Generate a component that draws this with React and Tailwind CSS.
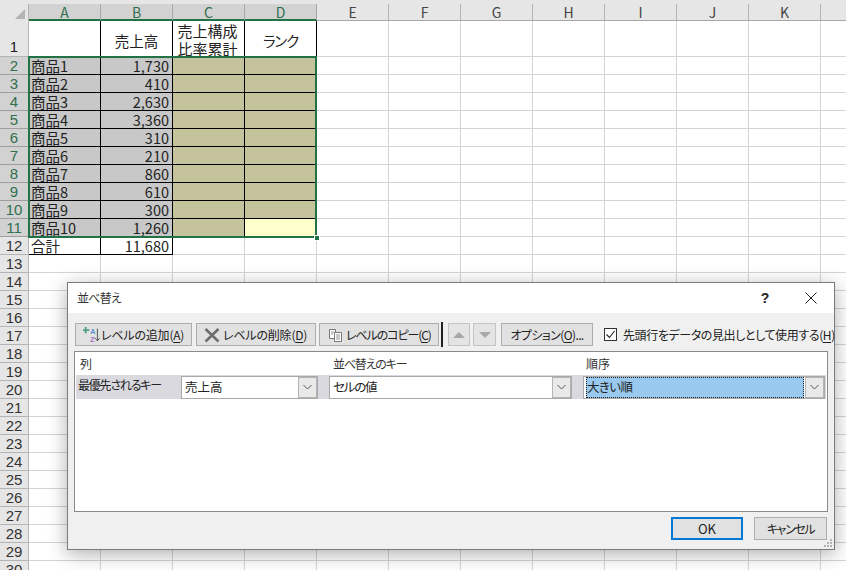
const jp = { fontFamily: '"Noto Sans CJK JP", "Noto Sans", sans-serif' };

const columns = ["A", "B", "C", "D", "E", "F", "G", "H", "I", "J", "K", ""];
const rows = [
  ["商品1", "1,730"],
  ["商品2", "410"],
  ["商品3", "2,630"],
  ["商品4", "3,360"],
  ["商品5", "310"],
  ["商品6", "210"],
  ["商品7", "860"],
  ["商品8", "610"],
  ["商品9", "300"],
  ["商品10", "1,260"],
  ["合計", "11,680"],
];
const emptyRows = Array.from({ length: 18 }, (_, i) => i + 13);
const plainCols = ["E", "F", "G", "H", "I", "J", "K", "L"];

function Plain() {
  return <div className="w-[72px] shrink-0 h-full border-r border-b border-[#d4d4d4]" />;
}

function RowHead({ n, selected }) {
  return (
    <div
      className={`w-[29px] shrink-0 h-full border-r border-b flex items-center justify-center font-['Liberation_Sans'] text-[15px] leading-none ${
        selected ? "bg-[#d2d2d2] text-[#2f6f4e] border-[#9f9f9f]" : "bg-[#e6e6e6] text-[#333] border-[#b4b4b4]"
      }`}
    >
      {n}
    </div>
  );
}

function Sheet() {
  return (
    <div className="w-[846px] h-[570px] bg-white overflow-hidden text-black" style={jp}>
      <div className="h-1 bg-[#e6e6e6]" />
      {/* column headers */}
      <div className="flex h-[17px]">
        <div className="w-[29px] shrink-0 bg-[#e6e6e6] border-r border-[#b4b4b4] flex items-end justify-end pr-[3px] pb-[2px]">
          <div className="w-0 h-0 border-l-[10px] border-l-transparent border-b-[10px] border-b-[#b4b4b4]" />
        </div>
        {columns.map((c, i) => (
          <div
            key={i}
            className={`w-[72px] shrink-0 border-r flex items-center justify-center text-[14px] leading-none ${
              i < 4
                ? "bg-[#d2d2d2] text-[#2f6f4e] border-[#a8a8a8] border-b-2 border-b-[#217346]"
                : "bg-[#e6e6e6] text-[#444] border-[#b4b4b4] border-b border-b-[#a8a8a8]"
            }`}
          >
            {c}
          </div>
        ))}
      </div>
      {/* row 1 */}
      <div className="flex h-9">
        <div className="w-[29px] shrink-0 h-full bg-[#e6e6e6] border-r border-b border-[#b4b4b4] flex items-end justify-center font-['Liberation_Sans'] text-[15px] leading-none pb-[2px] text-[#222]">
          1
        </div>
        <div className="w-[72px] shrink-0 h-full border-r border-b border-black" />
        <div className="w-[72px] shrink-0 h-full border-r border-b border-black flex items-center justify-center text-[14.5px] text-[#222] pt-[4px]">
          売上高
        </div>
        <div className="w-[72px] shrink-0 h-full border-r border-b border-black overflow-hidden text-center text-[15px] leading-[18px] pt-[1px] pr-[2px] text-[#222] whitespace-nowrap">
          売上構成
          <br />
          比率累計
        </div>
        <div className="w-[72px] shrink-0 h-full border-r border-b border-black flex items-center justify-center text-[14.5px] tracking-[-1.2px] text-[#222] pt-[5px]">
          ランク
        </div>
        {plainCols.map((c) => (
          <Plain key={c} />
        ))}
      </div>
      {/* rows 2 - 12 */}
      {rows.map(([name, val], i) => {
        const isTotal = i === 10;
        const bg = isTotal ? "bg-white" : "bg-[#c8c8c8]";
        return (
          <div key={name} className="flex h-[18px]">
            <RowHead n={i + 2} selected={!isTotal} />
            <div className={`w-[72px] shrink-0 h-full border-r border-b border-black pl-[2px] text-[14.5px] leading-[17px] text-[#222] ${bg}`}>
              {name}
            </div>
            <div className={`w-[72px] shrink-0 h-full border-r border-b border-black pr-[3px] text-right text-[14.5px] leading-[17px] text-[#222] ${bg}`}>
              {val}
            </div>
            {isTotal ? (
              <>
                <Plain />
                <Plain />
              </>
            ) : (
              <>
                <div className="w-[72px] shrink-0 h-full border-r border-b border-black bg-[#c4c39b]" />
                <div className={`w-[72px] shrink-0 h-full border-r border-b border-black ${i === 9 ? "bg-[#ffffcc]" : "bg-[#c4c39b]"}`} />
              </>
            )}
            {plainCols.map((c) => (
              <Plain key={c} />
            ))}
          </div>
        );
      })}
      {emptyRows.map((n) => (
        <div key={n} className="flex h-[18px]">
          <RowHead n={n} />
          {plainCols.concat(["M", "N", "O", "P"]).map((c) => (
            <Plain key={c} />
          ))}
        </div>
      ))}
    </div>
  );
}

function Mn({ children }) {
  return <span className="underline underline-offset-2">{children}</span>;
}

function ToolButton({ className = "", children }) {
  return (
    <div className={`h-[23px] shrink-0 bg-[#e1e1e1] border border-[#adadad] flex items-center text-[12px] leading-none text-[#222] whitespace-nowrap ${className}`}>
      {children}
    </div>
  );
}

function Chevron() {
  return (
    <svg width="9" height="6" viewBox="0 0 9 6" fill="none" stroke="#555" strokeWidth="1">
      <path d="M0.5 1 L4.5 5 L8.5 1" />
    </svg>
  );
}

function Combo({ className = "", children }) {
  return (
    <div className={`h-[23px] shrink-0 bg-white border border-[#a9a9a9] flex items-stretch text-[12.5px] text-[#222] ${className}`}>
      <div className="flex-1 min-w-0 flex items-center">{children}</div>
      <div className="w-[19px] shrink-0 bg-[#e9e9e9] border border-[#b4b4b4] flex items-center justify-center">
        <Chevron />
      </div>
    </div>
  );
}

function Dialog() {
  return (
    <div
      className="absolute left-[67px] top-[282px] w-[768px] h-[268px] bg-[#f0f0f0] border border-[#7a7a7a] shadow-[0_4px_18px_rgba(0,0,0,0.32)] flex flex-col text-[#222]"
      style={jp}
    >
      {/* title bar */}
      <div className="h-[30px] shrink-0 bg-white flex items-center pl-[9px] text-[12px]">
        <span className="flex-1 text-[#333] tracking-[-0.8px]">並べ替え</span>
        <span className="w-[16px] text-center font-bold text-[14px] mr-[32px]" style={{ fontFamily: '"Liberation Sans", sans-serif' }}>
          ?
        </span>
        <svg width="12" height="12" viewBox="0 0 12 12" className="mr-[17px]" stroke="#222" strokeWidth="1" fill="none">
          <path d="M0.5 0.5 L11.5 11.5 M11.5 0.5 L0.5 11.5" />
        </svg>
      </div>

      {/* toolbar */}
      <div className="flex items-center h-[23px] mt-[10px] pl-[7px]">
        <ToolButton className="w-[117px] pl-[7px]">
          <svg width="18" height="18" viewBox="0 0 20 20" className="shrink-0">
            <path d="M3 1v7M0 4.500h7" stroke="#4f9d86" strokeWidth="2" />
            <text x="8" y="9" fontSize="8" fontWeight="700" fill="#5a8ec9" fontFamily="Liberation Sans">A</text>
            <text x="8" y="18" fontSize="8" fontWeight="700" fill="#a56fc4" fontFamily="Liberation Sans">Z</text>
            <path d="M16 3v13M13.500 13.500 16 16.500l2.500-3" stroke="#444" strokeWidth="1" fill="none" />
          </svg>
          <span className="tracking-[-0.2px]">
            レベルの追加(<Mn>A</Mn>)
          </span>
        </ToolButton>
        <ToolButton className="w-[120px] ml-[4px] pl-[7px] gap-[3px]">
          <svg width="16" height="16" viewBox="0 0 16 16" className="shrink-0">
            <path d="M1.500 2 L14.500 14.500 M14.500 2 L1.500 14.500" stroke="#6e6e6e" strokeWidth="2.600" />
          </svg>
          <span className="tracking-[-0.2px]">
            レベルの削除(<Mn>D</Mn>)
          </span>
        </ToolButton>
        <ToolButton className="w-[120px] ml-[3px] pl-[8px] gap-[3px]">
          <svg width="15" height="14" viewBox="0 0 15 14" className="shrink-0" fill="#fff" stroke="#777" strokeWidth="1">
            <path d="M1.500 1.500h6v9h-6z" />
            <path d="M6.500 4.500h7v9h-7z" />
            <path d="M8 7h4M8 9h4M8 11h4M3 4h3M3 6h2" fill="none" strokeWidth="0.800" />
          </svg>
          <span className="tracking-[-1.1px]">
            レベルのコピー(<Mn>C</Mn>)
          </span>
        </ToolButton>
        <div className="w-[2px] h-[25px] ml-[2px] bg-[#222] shrink-0" />
        <ToolButton className="w-[22px] ml-[5px] justify-center bg-[#e4e4e4] border-[#c4c4c4]">
          <div className="w-0 h-0 border-x-[6px] border-x-transparent border-b-[6px] border-b-[#a8a8a8]" />
        </ToolButton>
        <ToolButton className="w-[23px] ml-[3px] justify-center bg-[#e4e4e4] border-[#c4c4c4]">
          <div className="w-0 h-0 border-x-[6px] border-x-transparent border-t-[6px] border-t-[#a8a8a8]" />
        </ToolButton>
        <ToolButton className="w-[92px] ml-[5px] justify-center">
          <span className="tracking-[-0.6px]">
            オプション(<Mn>O</Mn>)...
          </span>
        </ToolButton>
        <div className="w-[13px] h-[13px] ml-[11px] shrink-0 bg-white border border-[#333] flex items-center justify-center">
          <svg width="11" height="11" viewBox="0 0 11 11" fill="none" stroke="#222" strokeWidth="1.100">
            <path d="M1.500 5.500 L4.500 8.500 L9.500 2" />
          </svg>
        </div>
        <span className="ml-[6px] text-[12px] tracking-[-0.4px] whitespace-nowrap">
          先頭行をデータの見出しとして使用する(<Mn>H</Mn>)
        </span>
      </div>

      {/* levels list */}
      <div className="mt-[5px] mx-[6px] h-[161px] bg-white border border-[#8a8a8a] flex flex-col">
        <div className="flex h-[23px] shrink-0 items-center text-[12px] text-[#333]">
          <span className="w-[254px] pl-[5px] shrink-0">列</span>
          <span className="w-[253px] pl-[4px] shrink-0 tracking-[-1.2px]">並べ替えのキー</span>
          <span className="pl-[4px]">順序</span>
        </div>
        <div className="flex items-center h-[24px] mx-[1px] bg-[#d9d9df] shrink-0">
          <span className="w-[105px] pl-[2px] shrink-0 text-[12px] tracking-[-1.2px] -mt-[4px] whitespace-nowrap">最優先されるキー</span>
          <Combo className="w-[137px]">
            <span className="pl-[3px]">売上高</span>
          </Combo>
          <Combo className="w-[243px] ml-[11px]">
            <span className="pl-[3px] tracking-[-1.2px]">セルの値</span>
          </Combo>
          <Combo className="w-[242px] ml-[11px]">
            <span className="w-full h-full m-[2px] mr-[1px] bg-[#99c9ef] border border-dotted border-[#222] flex items-center tracking-[-0.6px]">
              大きい順
            </span>
          </Combo>
        </div>
      </div>

      {/* footer */}
      <div className="flex-1 flex items-start justify-end pt-[5px] pr-[7px] relative">
        <div className="w-[72px] h-[23px] bg-[#e1e1e1] border-2 border-[#0078d7] flex items-center justify-center text-[13px]">OK</div>
        <div className="w-[73px] h-[23px] ml-[11px] bg-[#e1e1e1] border border-[#adadad] flex items-center justify-center text-[12px] tracking-[-1.4px]">キャンセル</div>
        <svg width="10" height="10" viewBox="0 0 10 10" className="absolute right-[1px] bottom-[1px]" fill="#b5b5b5">
          <rect x="7" y="1" width="2" height="2" />
          <rect x="4" y="4" width="2" height="2" />
          <rect x="7" y="4" width="2" height="2" />
          <rect x="1" y="7" width="2" height="2" />
          <rect x="4" y="7" width="2" height="2" />
          <rect x="7" y="7" width="2" height="2" />
        </svg>
      </div>
    </div>
  );
}

export default function App() {
  return (
    <div className="relative w-[846px] h-[570px] overflow-hidden [font-feature-settings:'palt']">
      <Sheet />
      {/* selection range A2:D11 */}
      <div className="absolute left-[28px] top-[56px] w-[289px] h-[182px] border-2 border-[#217346]" />
      <div className="absolute left-[314px] top-[235px] w-[4px] h-[4px] bg-[#217346] border border-white box-content" />
      <Dialog />
    </div>
  );
}
